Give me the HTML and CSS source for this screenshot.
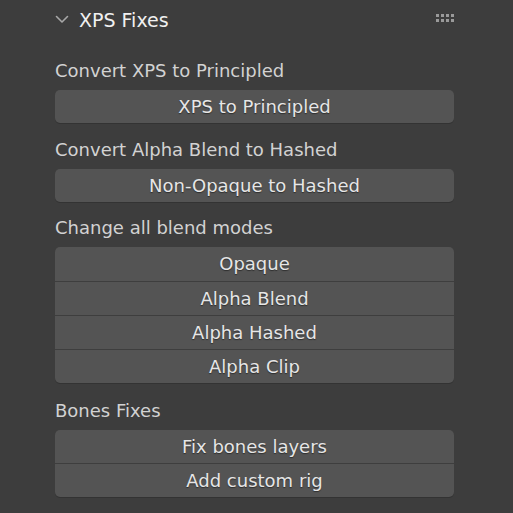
FILE: index.html
```html
<!DOCTYPE html>
<html>
<head>
<meta charset="utf-8">
<link rel="stylesheet" href="styles.css">
</head>
<body>
<div class="panel">
  <div class="header">
    <svg class="chevron" width="14" height="9" viewBox="0 0 14 9"><path d="M1.5 1.5 L7 7 L12.5 1.5" fill="none" stroke="#a8a8a8" stroke-width="1.6" stroke-linecap="round" stroke-linejoin="round"/></svg>
    <span class="title">XPS Fixes</span>
    <span class="spacer"></span>
    <svg class="grip" width="20" height="8" viewBox="0 0 20 8">
      <g fill="#9a9a9a">
        <rect x="0" y="0" width="3" height="3"/><rect x="5" y="0" width="3" height="3"/><rect x="10" y="0" width="3" height="3"/><rect x="15" y="0" width="3" height="3"/>
        <rect x="0" y="5" width="3" height="3"/><rect x="5" y="5" width="3" height="3"/><rect x="10" y="5" width="3" height="3"/><rect x="15" y="5" width="3" height="3"/>
      </g>
    </svg>
  </div>
  <div class="section">
    <div class="label">Convert XPS to Principled</div>
    <div class="group"><div class="btn">XPS to Principled</div></div>
  </div>
  <div class="section">
    <div class="label">Convert Alpha Blend to Hashed</div>
    <div class="group"><div class="btn">Non-Opaque to Hashed</div></div>
  </div>
  <div class="section s3">
    <div class="label">Change all blend modes</div>
    <div class="group">
      <div class="btn">Opaque</div>
      <div class="btn">Alpha Blend</div>
      <div class="btn">Alpha Hashed</div>
      <div class="btn">Alpha Clip</div>
    </div>
  </div>
  <div class="section s4">
    <div class="label">Bones Fixes</div>
    <div class="group">
      <div class="btn">Fix bones layers</div>
      <div class="btn">Add custom rig</div>
    </div>
  </div>
</div>
</body>
</html>
```

FILE: styles.css
```css
html, body {
  margin: 0;
  padding: 0;
  background: #3d3d3d;
  height: 100%;
}
body {
  font-family: "DejaVu Sans", "Liberation Sans", sans-serif;
  font-size: 18px;
  color: #d4d4d4;
}
.panel {
  width: 399px;
  margin-left: 55px;
}
.header {
  height: 40px;
  display: flex;
  align-items: center;
}
.chevron {
  margin-left: 0;
  margin-right: 10px;
  margin-top: -2px;
}
.title {
  color: #f0f0f0;
  font-size: 19px;
}
.spacer {
  flex: 1;
}
.grip {
  margin-right: -2px;
  margin-top: -5px;
}
.section {
  margin-top: 19px;
}
.section + .section {
  margin-top: 15px;
}
.section.s3 {
  margin-top: 14px;
}
.section.s4 {
  margin-top: 16px;
}
.label {
  height: 24px;
  line-height: 24px;
  margin-bottom: 7px;
  color: #d2d2d2;
}
.group {
  background: #545454;
  border-radius: 5px;
  box-shadow: 0 1px 0 #333333;
  display: flex;
  flex-direction: column;
  overflow: hidden;
}
.btn {
  box-sizing: border-box;
  height: 33px;
  line-height: 33px;
  text-align: center;
  color: #e6e6e6;
  text-shadow: 0 1px 1px #2e2e2e;
}
.btn + .btn {
  height: 34px;
  border-top: 1px solid #3e3e3e;
}
.s3 .btn:first-child {
  height: 34px;
}
```
